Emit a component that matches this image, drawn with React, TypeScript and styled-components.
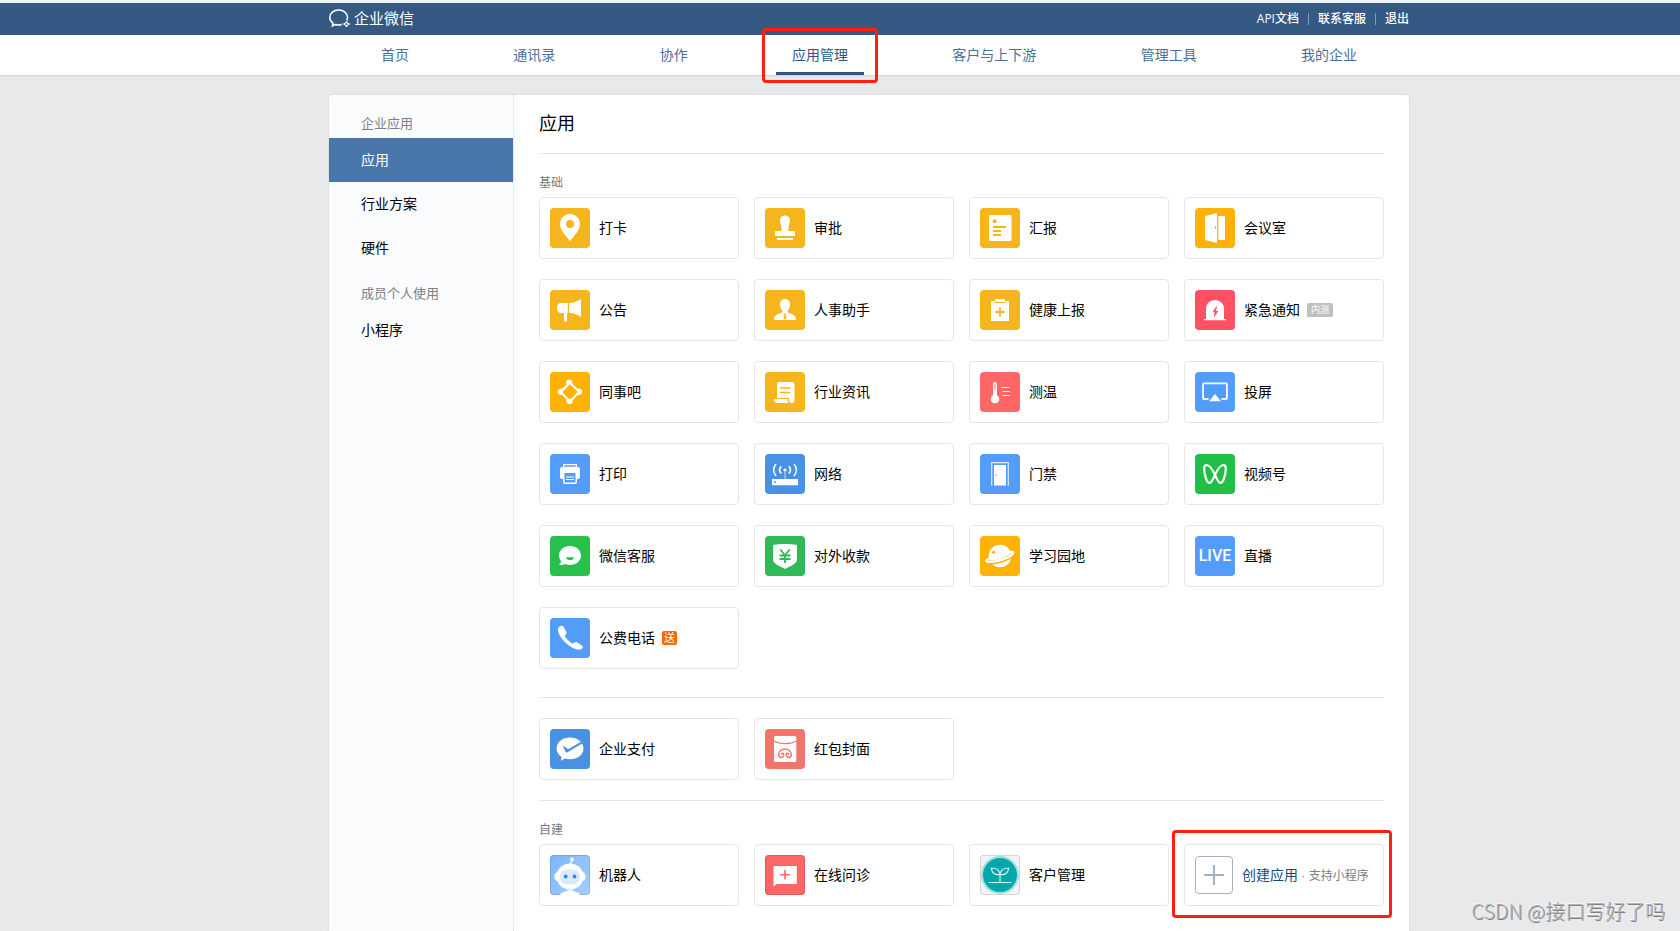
import React from 'react';
import styled, { createGlobalStyle, css } from 'styled-components';

const GlobalStyle = createGlobalStyle`
  * { box-sizing: border-box; }
  body {
    margin: 0;
    background: #e8e9eb;
    color: #000;
    font-family: "Liberation Sans", "Noto Sans CJK SC", sans-serif;
    font-size: 14px;
  }
  a { color: inherit; text-decoration: none; }
  h1, h2, h3, ul { margin: 0; padding: 0; font-weight: 400; }
  ul { list-style: none; }
`;

const Page = styled.div`
  position: relative;
  display: flex;
  flex-direction: column;
  min-height: 100vh;
`;

/* Horizontal bands share one centred 1080px column, shifted right of the centre. */
const Band = styled.div`
  padding-left: 58px;
`;

const Column = styled.div`
  display: flex;
  align-items: center;
  max-width: 1080px;
  margin: 0 auto;
`;

const TopBar = styled(Band).attrs({ as: 'header' })`
  border-top: 3px solid #f1f3f3;
  background: #345983;
  color: #fff;
`;

const TopBarInner = styled(Column)`
  height: 32px;
  justify-content: space-between;
`;

const Brand = styled.a`
  display: flex;
  align-items: center;
  gap: 3px;
  font-size: 15px;
  line-height: 20px;
`;

const TopLinks = styled.ul`
  display: flex;
  align-items: center;
  font-family: "Open Sans", "Noto Sans CJK SC", sans-serif;
  font-size: 12px;
  line-height: 16px;
  font-weight: 500;

  li + li {
    display: flex;
    align-items: center;
    margin-left: 9px;
  }
  li + li::before {
    content: '';
    width: 1px;
    height: 12px;
    margin-right: 9px;
    background: #7d9bbf;
  }
`;

const NavBar = styled(Band).attrs({ as: 'nav' })`
  background: #fff;
  box-shadow: 0 1px 1px #d2d4d6;
`;

const NavInner = styled(Column)`
  justify-content: space-between;
  padding: 0 36px;
`;

const redFrame = css`
  position: absolute;
  border: 3px solid #ff2011;
  border-radius: 4px;
  pointer-events: none;
  content: '';
`;

const NavItem = styled.a<{ $active?: boolean }>`
  position: relative;
  height: 40px;
  padding: 0 16px;
  border-bottom: 3px solid ${p => (p.$active ? '#2f5785' : 'transparent')};
  line-height: 40px;
  color: ${p => (p.$active ? '#2f5785' : '#4b6f9a')};

  ${p => p.$active && css`
    &::after {
      ${redFrame}
      inset: -7px -14px -11px;
    }
  `}
`;

const Main = styled(Band).attrs({ as: 'main' })`
  display: flex;
  flex: 1;
  flex-direction: column;
  padding-top: 20px;
`;

const Panel = styled.div`
  display: flex;
  flex: 1;
  width: 100%;
  max-width: 1080px;
  margin: 0 auto;
  overflow: hidden;
  border-radius: 4px 4px 0 0;
  background: #fff;
  box-shadow: 0 0 2px #c9cbcd;
`;

const Sidebar = styled.aside`
  flex: 0 0 185px;
  padding-top: 5px;
  border-right: 1px dotted #d3dce4;
  background: #f9fbfd;
`;

const SideHeading = styled.h2`
  padding: 10px 0 0 32px;
  font-size: 13px;
  line-height: 28px;
  color: #7e8081;
`;

const SideLink = styled.a<{ $active?: boolean }>`
  display: block;
  padding-left: 32px;
  line-height: 44px;
  ${p => p.$active && css`
    background: #4a77ab;
    color: #fff;
  `}
`;

const Content = styled.div`
  flex: 1;
  min-width: 0;
  padding: 0 25px 5px 25px;
`;

const Title = styled.h1`
  font-size: 18px;
  line-height: 58px;
`;

const Section = styled.section<{ $roomy?: boolean }>`
  padding: 20px 0 ${p => (p.$roomy ? 28 : 20)}px;
  border-top: 1px solid #e2e4e6;
`;

const SectionHeading = styled.h2`
  margin-bottom: 5px;
  font-size: 12px;
  line-height: 18px;
  color: #787a7c;
`;

const Grid = styled.div`
  display: grid;
  grid-template-columns: repeat(4, minmax(0, 1fr));
  gap: 20px 15px;
`;

const Card = styled.a`
  display: flex;
  align-items: center;
  height: 62px;
  padding: 0 10px;
  border: 1px solid #e4e6e9;
  border-radius: 4px;
  background: #fff;
  white-space: nowrap;
`;

const Label = styled.span`
  margin-left: 9px;
  line-height: 20px;
`;

const Tile = styled.span<{ $bg: string; $outlined?: boolean }>`
  display: flex;
  align-items: center;
  justify-content: center;
  flex: 0 0 40px;
  height: 40px;
  overflow: hidden;
  border-radius: 4px;
  background: ${p => p.$bg};
  color: ${p => p.$bg};
  ${p => p.$outlined && css`box-shadow: inset 0 0 0 1px rgba(0, 0, 0, 0.12);`}
`;

const LiveText = styled.span`
  font: 500 16px/20px Roboto, sans-serif;
  color: #fff;
`;

const BetaTag = styled.span`
  margin-left: 7px;
  padding: 0 4px;
  border-radius: 2px 2px 2px 0;
  background: #bfc1c1;
  color: #fff;
  font-size: 9px;
  line-height: 14px;
`;

const GiftTag = styled(BetaTag)`
  padding: 0 2px;
  border-radius: 2px;
  background: #ff6600;
  font-size: 11px;
`;

const CreateCard = styled(Card).attrs({ as: 'button', type: 'button' })`
  position: relative;
  font: inherit;
  color: #16497c;
  text-align: left;
  cursor: pointer;

  &::after {
    ${redFrame}
    inset: -15px -9px -13px -13px;
  }
`;

const PlusBox = styled.span`
  display: flex;
  align-items: center;
  justify-content: center;
  flex: 0 0 38px;
  height: 38px;
  border: 1px solid #a5b2c1;
  border-radius: 4px;
`;

const Hint = styled.small`
  font-size: 12px;
  color: #7b7d80;
`;

const Watermark = styled.div`
  position: absolute;
  right: 15px;
  bottom: 5px;
  font: 300 20px/30px "Noto Sans CJK SC", sans-serif;
  color: #b4b5b7;
  text-shadow: 1px 1px 0 #808284, -1px -1px 0 #f6f6f6;
`;

const W = '#fff';
const C = 'currentColor';

const glyphs: Record<string, React.ReactNode> = {
  pin: <path fill={W} fillRule="evenodd" d="M20 6C14.400 6 10 10.400 10 16c0 6.600 6.500 12 10 17.300C23.500 28 30 22.600 30 16c0-5.600-4.400-10-10-10zm0 6a4 4 0 1 1 0 8 4 4 0 0 1 0-8z" />,
  stamp: <path fill={W} d="M20 7.500c-3 0-5 2.200-5 5 0 3 2 5.500 1.500 10.500H11a1 1 0 0 0-1 1v4h20v-4a1 1 0 0 0-1-1h-5.500c-.5-5 1.500-7.500 1.500-10.500 0-2.800-2-5-5-5zM12 30h16v2H12z" />,
  horn: <path fill={W} d="M17.800 13H11c-2.500 0-4 2-4 5s1.500 5 4 5h3v8c0 1 3 1 3 0v-8h.8zM19 13c5 0 9-2 12-4v18c-3-2-7-4-12-4z" />,
  person: <>
    <path fill={W} d="M20 9c-3 0-5 2.200-5 5.500 0 2.500 1 5 2.700 6.500-.2 1.500-1.200 1.800-3.200 2.500C11 24.800 9 26 9 30h22c0-4-2-5.200-5.500-6.500-2-.7-3-1-3.200-2.500 1.700-1.500 2.700-4 2.700-6.500C25 11.200 23 9 20 9z" />
    <path fill={C} d="M18.800 23.500h2.400l-.6 1.500 1 3-1.600 1.700-1.600-1.700 1-3z" />
  </>,
  ring: <>
    <path fill="none" stroke={W} strokeWidth="2" d="M12 19l6.500-7M21 12l7 6.500M27.500 21.500L21.500 28M18.500 28L12 21.500" />
    <g fill={W}>
      <path d="M16.200 9.800c1-3 5-3 6 0 .6 2 0 2 1.300 4.700l-3.700-2-3.600.8zM30 16.800c3 1 3 5 0 6-2 .6-2 0-4.700 1.400l2-4-.8-3.400zM22.500 30c-1 3-5 3-6 0-.6-2 0-2-1.300-4.700l3.700 2 3.600-.8zM10 22.800c-3-1-3-5 0-6 2-.6 2 0 4.700-1.400l-2 4 .8 3.400z" />
    </g>
  </>,
  scroll: <>
    <path fill={W} d="M14 10h13c1.500 0 2.500 1 2.500 2.500V28c0 2-1 3-2.700 3s-2.800-1-2.800-3v-2H12V12c0-1.200.8-2 2-2z" />
    <path fill={W} d="M9 27h13.500c0 1.800.4 3 1.300 4H12c-2 0-3-1.500-3-4z" />
    <path stroke={C} strokeWidth="1.500" d="M15 16h10.500M15 20.500h10.500" />
  </>,
  report: <>
    <rect x="9" y="7" width="22.500" height="26" rx="1" fill={W} />
    <circle cx="14.600" cy="13.200" r="2" fill={C} />
    <path stroke={C} strokeWidth="2" d="M13 19h13M13 23h8M13 27h8" />
  </>,
  door: <>
    <path fill={W} d="M10 8l12-3v30l-12-3zM23.300 8H30v24h-6.700z" />
    <path stroke={C} d="M20.500 18v3" />
  </>,
  clipboard: <>
    <path fill={W} d="M12 11h2.500v2h11v-2H28c.6 0 1 .4 1 1v19H11V12c0-.6.4-1 1-1zM16 9h8.500c.8 0 .8 3 0 3H15.500c-.8 0-.4-3 .5-3z" />
    <path stroke={C} strokeWidth="1.800" d="M20 17.500v9M15.500 22h9" />
  </>,
  alarm: <>
    <path fill={W} d="M11 29V19c0-5.500 4-9 9-9s9 3.500 9 9v10h2v1.200H9V29z" />
    <path fill={C} d="M22 15.500l-4.500 6.700h2.200l-1 5.800 4.600-7h-2.200z" />
  </>,
  thermo: <>
    <path fill={W} d="M13 12a2 2 0 0 1 4 0v11.200a4.300 4.300 0 1 1-4 0z" />
    <path stroke={C} d="M15 12v5.500" />
    <path stroke={W} strokeWidth="1.100" d="M21 15.500h8.500M22.500 19.500H30M22.500 23.500H30" />
  </>,
  cast: <>
    <path fill="none" stroke={W} strokeWidth="1.800" d="M13.500 27H9c-.6 0-.9-.4-.9-1V12.300c0-.5.4-.9.9-.9h22c.5 0 .9.4.9.9V26c0 .6-.4 1-.9 1h-4.500" />
    <path fill={W} d="M20 22l6 7.200H14z" />
  </>,
  printer: <>
    <path fill={W} d="M13 10h14v3h1c1.200 0 2 .8 2 2v8c0 1.200-.8 2-2 2h-1v3c0 1.200-.8 2-2 2H15c-1.200 0-2-.8-2-2v-3h-1c-1.200 0-2-.8-2-2v-8c0-1.200.8-2 2-2h1z" />
    <path fill={C} d="M14.300 11.300h11.400v1.500H14.300zM14.500 19h11v8.500c0 .6-.4 1-1 1h-9c-.6 0-1-.4-1-1z" />
    <path stroke={W} d="M16 23h8M16 25.500h8" />
  </>,
  router: <>
    <rect x="7" y="25" width="26" height="6.200" rx=".6" fill={W} />
    <circle cx="10.200" cy="28" r="1" fill={C} />
    <path stroke={W} opacity=".7" d="M20 18v7" />
    <circle cx="20" cy="16" r="1.600" fill={W} />
    <path fill="none" stroke={W} strokeWidth="1.600" d="M16.300 12.500c-2.400 1.800-2.400 5.200 0 7M23.700 12.500c2.400 1.800 2.400 5.200 0 7M11 10c-3 3.600-3 8.400 0 12M29 10c3 3.600 3 8.400 0 12" />
  </>,
  access: <>
    <path fill="none" stroke={W} strokeWidth="1.200" opacity=".8" d="M11.700 31.700V8.700h16.600v23" />
    <rect x="14" y="11" width="12" height="20.500" fill={W} />
    <circle cx="15.700" cy="21" r=".8" fill={C} />
  </>,
  channels: <path fill="none" stroke={W} strokeWidth="2.200" strokeLinejoin="round" d="M20 21c-2.500-5.500-6-10-8.500-10-1.800 0-2.300 1.500-2.300 3.500C9.200 19.500 11.500 29 14.500 29c2 0 3.500-4 5.500-8 2.500-5.500 6-10 8.500-10 1.800 0 2.300 1.500 2.300 3.500 0 5-2.300 14.500-5.300 14.500-2 0-3.500-4-5.500-8z" />,
  service: <>
    <path fill={W} d="M20 10c-6.200 0-11 4.200-11 9.500 0 2 .8 4 2 5.500 0 1.500-1 2.800-2 3.800 2 .4 4.500.2 6-.8 1.500.7 3.200 1 5 1 6.200 0 11-4.200 11-9.500S26.200 10 20 10z" />
    <path fill={C} d="M16 21.200h8c-.5 2-2 3-4 3s-3.500-1-4-3z" />
  </>,
  shield: <>
    <path fill={W} d="M9 8.800C15 7.800 25 7.800 31 8.800c.6.100 1 .5 1 1V24c0 3.500-7.500 6.500-12 9-4.500-2.500-12-5.500-12-9V9.800c0-.5.400-.9 1-1z" />
    <path fill="none" stroke={C} strokeWidth="1.800" d="M15.300 13.500l4.700 5.700 4.700-5.700M20 19v8M14.500 19.500h11M14.500 23h11" />
  </>,
  planet: <>
    <circle cx="20" cy="20" r="11.300" fill={W} />
    <path fill="none" stroke={C} strokeWidth="4" d="M7 26.500C14 27.500 27 24 33 18" />
    <path fill="none" stroke={W} strokeWidth="2.400" strokeLinecap="round" d="M9 22.500C6.500 23.500 5.500 25 7 25.500c6 1.500 20-2.500 25-7 2-1.800 1.500-2.700-1-2.500" />
    <circle cx="13.600" cy="16.300" r="1.500" fill={C} />
  </>,
  phone: <path fill={W} d="M9.200 8.800c1.800-1.600 3.600-1.500 4.600.2l2.500 5c.6 1.400-.2 2.300-1.500 3.500 1 3 5 7 8 8 1.300-1.300 2.600-1.900 4-1.200l4.800 2.900c1.600 1 1.400 2.500.2 3.500-3.300 2.200-8 .3-12.800-3.200C13 23 8.500 17 8 12.500c-.1-1.500.1-2.700 1.200-3.700z" />,
  pay: <>
    <path fill={W} d="M20 8.500c-7.500 0-13.500 4.800-13.500 11 0 3.500 2 6.500 5 8.500l-.7 3.700 4.200-2.200c1.600.5 3.200.7 5 .7 7.500 0 13.500-4.600 13.500-10.700S27.500 8.500 20 8.500z" />
    <path fill={C} d="M12.700 16.500l4.800 3.200c.5.300 1 .3 1.500 0L31 12.800l1.200 1.700-14.700 8.700c-1 .5-1.600.3-2-.5z" />
  </>,
  packet: <>
    <rect x="9" y="7" width="22.300" height="26" rx="1.500" fill={W} />
    <path fill="none" stroke={C} strokeWidth="1.200" d="M9 12c6 3.600 16 3.600 22.300 0" />
    <path fill="none" stroke={C} strokeWidth="1.500" strokeLinecap="round" d="M16.500 25.200c.2-1.400 2.300-1.300 2.300.4 0 1.800-1.300 3-2.800 2.900-1.600-.1-2.500-1.500-2.300-3.200.3-3 2.800-5.300 6.300-5.300s6 2.300 6.300 5.300c.2 1.700-.7 3.100-2.300 3.200-1.500.1-2.800-1.100-2.800-2.900 0-1.700 2.100-1.800 2.300-.4" />
  </>,
  robot: <>
    <path stroke={W} strokeWidth="1.300" d="M20 10l2-5" />
    <circle cx="22" cy="4.500" r="1.900" fill={W} />
    <ellipse cx="20" cy="21.500" rx="13.500" ry="13" fill={W} />
    <rect x="4.500" y="17" width="31" height="9" rx="4" fill={W} />
    <rect x="10" y="14.500" width="20" height="15" rx="7" fill="#d9eafd" />
    <circle cx="15.700" cy="21.500" r="1.900" fill="#2f84ee" />
    <circle cx="24.500" cy="21.500" r="1.900" fill="#2f84ee" />
    <path fill="#e3f0fe" d="M17 33.500h6V37h-6z" />
    <path fill={W} d="M10 40c1-3 5-4 10-4s9 1 10 4z" />
  </>,
  consult: <>
    <path fill={W} d="M9.500 11h21.300c.6 0 1 .4 1 1v16c0 .6-.4 1-1 1H12l-3.500 2.200V12c0-.6.4-1 1-1z" />
    <path stroke={C} strokeWidth="1.600" d="M20 15v9.500M15.300 19.700h9.500" />
  </>,
  sprout: <>
    <circle cx="20" cy="20" r="19" fill="#a3dfe0" />
    <circle cx="20" cy="20" r="17" fill="#02a9ac" />
    <path fill="none" stroke="#d8f4f4" strokeWidth="1.100" d="M20 27V19.500c-5 .8-8.200-1.500-8.700-6.200 4.700-.6 8 1.500 8.700 6.200.7-4.700 4-6.800 8.700-6.200-.5 4.700-3.700 7-8.700 6.200M8.500 27.500h23" />
  </>,
};

type App = { name: string; icon: string; bg: string; outlined?: boolean; beta?: string; gift?: string };

const YELLOW = '#f7b51d';
const ORANGE = '#ffb206';
const BLUE = '#549cfa';

const basicApps: App[] = [
  { name: '打卡', icon: 'pin', bg: YELLOW },
  { name: '审批', icon: 'stamp', bg: YELLOW },
  { name: '汇报', icon: 'report', bg: YELLOW },
  { name: '会议室', icon: 'door', bg: ORANGE },
  { name: '公告', icon: 'horn', bg: YELLOW },
  { name: '人事助手', icon: 'person', bg: YELLOW },
  { name: '健康上报', icon: 'clipboard', bg: YELLOW },
  { name: '紧急通知', icon: 'alarm', bg: '#ff5064', beta: '内测' },
  { name: '同事吧', icon: 'ring', bg: ORANGE },
  { name: '行业资讯', icon: 'scroll', bg: YELLOW },
  { name: '测温', icon: 'thermo', bg: '#ff6665' },
  { name: '投屏', icon: 'cast', bg: BLUE },
  { name: '打印', icon: 'printer', bg: BLUE },
  { name: '网络', icon: 'router', bg: '#4892e6' },
  { name: '门禁', icon: 'access', bg: BLUE },
  { name: '视频号', icon: 'channels', bg: '#20bf46' },
  { name: '微信客服', icon: 'service', bg: '#28c04c' },
  { name: '对外收款', icon: 'shield', bg: '#2fb957' },
  { name: '学习园地', icon: 'planet', bg: ORANGE },
  { name: '直播', icon: 'live', bg: BLUE },
  { name: '公费电话', icon: 'phone', bg: BLUE, gift: '送' },
];

const payApps: App[] = [
  { name: '企业支付', icon: 'pay', bg: '#4991e1' },
  { name: '红包封面', icon: 'packet', bg: '#f0766d' },
];

const customApps: App[] = [
  { name: '机器人', icon: 'robot', bg: 'linear-gradient(135deg, #7cb5fd, #a6d0ff)', outlined: true },
  { name: '在线问诊', icon: 'consult', bg: '#ff6564', outlined: true },
  { name: '客户管理', icon: 'sprout', bg: '#f3f3f3', outlined: true },
];

const navItems = ['首页', '通讯录', '协作', '应用管理', '客户与上下游', '管理工具', '我的企业'];

function AppCard({ app }: { app: App }) {
  return (
    <Card href="#">
      <Tile $bg={app.bg} $outlined={app.outlined}>
        {app.icon === 'live'
          ? <LiveText>LIVE</LiveText>
          : <svg width="40" height="40" viewBox="0 0 40 40" aria-hidden="true">{glyphs[app.icon]}</svg>}
      </Tile>
      <Label>{app.name}</Label>
      {app.beta && <BetaTag>{app.beta}</BetaTag>}
      {app.gift && <GiftTag>{app.gift}</GiftTag>}
    </Card>
  );
}

export default function App() {
  return (
    <Page>
      <GlobalStyle />
      <TopBar>
        <TopBarInner>
          <Brand href="#">
            <svg width="22" height="20" viewBox="0 0 22 20" fill="none" stroke="#fff" strokeWidth="1.500" aria-hidden="true">
              <path d="M17.800 11.500c.5-1 .7-2 .7-3C18.500 4.200 14.500 1 9.600 1S.8 4.200.8 8.500c0 2.300 1.200 4.300 3.200 5.700l-.6 2.800 3-1.500c2 .6 4.300.6 6.300 0" />
              <path strokeWidth="1.200" d="M17.500 12.300c.3 1.500 1 2.200 2.700 2.700-1.700.5-2.400 1.200-2.700 2.900-.3-1.700-1-2.400-2.700-2.900 1.700-.5 2.400-1.200 2.700-2.700z" />
            </svg>
            <span>企业微信</span>
          </Brand>
          <TopLinks>
            <li><a href="#">API文档</a></li>
            <li><a href="#">联系客服</a></li>
            <li><a href="#">退出</a></li>
          </TopLinks>
        </TopBarInner>
      </TopBar>
      <NavBar>
        <NavInner>
          {navItems.map(item => (
            <NavItem key={item} href="#" $active={item === '应用管理'}>{item}</NavItem>
          ))}
        </NavInner>
      </NavBar>
      <Main>
        <Panel>
          <Sidebar>
            <SideHeading>企业应用</SideHeading>
            <SideLink href="#" $active>应用</SideLink>
            <SideLink href="#">行业方案</SideLink>
            <SideLink href="#">硬件</SideLink>
            <SideHeading>成员个人使用</SideHeading>
            <SideLink href="#">小程序</SideLink>
          </Sidebar>
          <Content>
            <Title>应用</Title>
            <Section $roomy>
              <SectionHeading>基础</SectionHeading>
              <Grid>{basicApps.map(app => <AppCard key={app.name} app={app} />)}</Grid>
            </Section>
            <Section>
              <Grid>{payApps.map(app => <AppCard key={app.name} app={app} />)}</Grid>
            </Section>
            <Section>
              <SectionHeading>自建</SectionHeading>
              <Grid>
                {customApps.map(app => <AppCard key={app.name} app={app} />)}
                <CreateCard>
                  <PlusBox>
                    <svg width="20" height="20" viewBox="0 0 20 20" stroke="#a5b2c1" strokeWidth="2" aria-hidden="true">
                      <path d="M10 0v20M0 10h20" />
                    </svg>
                  </PlusBox>
                  <Label>创建应用<Hint> · 支持小程序</Hint></Label>
                </CreateCard>
              </Grid>
            </Section>
          </Content>
        </Panel>
      </Main>
      <Watermark>CSDN @接口写好了吗</Watermark>
    </Page>
  );
}
